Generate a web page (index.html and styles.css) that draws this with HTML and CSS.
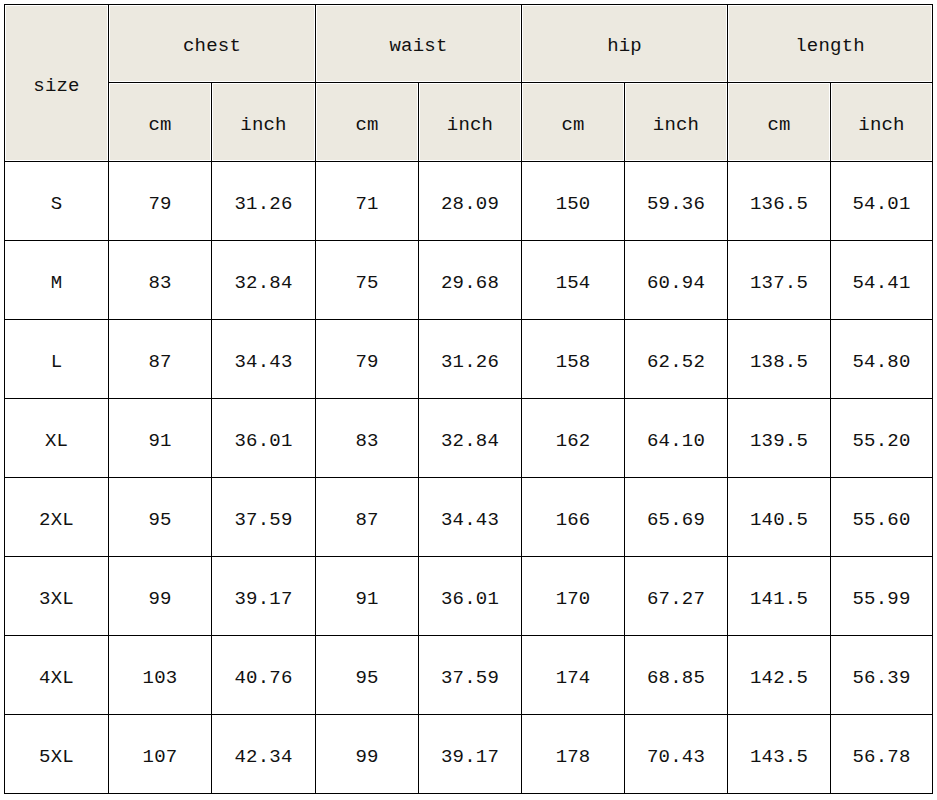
FILE: index.html
```html
<!DOCTYPE html>
<html>
<head>
<meta charset="utf-8">
<link rel="stylesheet" href="styles.css">
</head>
<body>
<table class="size-table">
  <colgroup>
    <col class="c-size">
    <col class="c-a"><col class="c-b"><col class="c-a"><col class="c-a">
    <col class="c-a"><col class="c-a"><col class="c-a"><col class="c-last">
  </colgroup>
  <thead>
    <tr class="h1">
      <th rowspan="2">size</th>
      <th colspan="2">chest</th>
      <th colspan="2">waist</th>
      <th colspan="2">hip</th>
      <th colspan="2">length</th>
    </tr>
    <tr class="h2">
      <th>cm</th><th>inch</th><th>cm</th><th>inch</th><th>cm</th><th>inch</th><th>cm</th><th>inch</th>
    </tr>
  </thead>
  <tbody>
    <tr><td>S</td><td>79</td><td>31.26</td><td>71</td><td>28.09</td><td>150</td><td>59.36</td><td>136.5</td><td>54.01</td></tr>
    <tr><td>M</td><td>83</td><td>32.84</td><td>75</td><td>29.68</td><td>154</td><td>60.94</td><td>137.5</td><td>54.41</td></tr>
    <tr><td>L</td><td>87</td><td>34.43</td><td>79</td><td>31.26</td><td>158</td><td>62.52</td><td>138.5</td><td>54.80</td></tr>
    <tr><td>XL</td><td>91</td><td>36.01</td><td>83</td><td>32.84</td><td>162</td><td>64.10</td><td>139.5</td><td>55.20</td></tr>
    <tr><td>2XL</td><td>95</td><td>37.59</td><td>87</td><td>34.43</td><td>166</td><td>65.69</td><td>140.5</td><td>55.60</td></tr>
    <tr><td>3XL</td><td>99</td><td>39.17</td><td>91</td><td>36.01</td><td>170</td><td>67.27</td><td>141.5</td><td>55.99</td></tr>
    <tr><td>4XL</td><td>103</td><td>40.76</td><td>95</td><td>37.59</td><td>174</td><td>68.85</td><td>142.5</td><td>56.39</td></tr>
    <tr><td>5XL</td><td>107</td><td>42.34</td><td>99</td><td>39.17</td><td>178</td><td>70.43</td><td>143.5</td><td>56.78</td></tr>
  </tbody>
</table>
</body>
</html>
```
FILE: styles.css
```css
html, body {
  margin: 0;
  padding: 0;
  background: #ffffff;
}
body {
  padding: 4px 0 0 4px;
}
.size-table {
  border-collapse: collapse;
  table-layout: fixed;
  width: 929px;
  font-family: "Liberation Mono", "DejaVu Sans Mono", monospace;
  font-size: 19px;
  color: #111;
}
.c-size { width: 104px; }
.c-a { width: 103px; }
.c-b { width: 104px; }
.c-last { width: 102px; }
.size-table th,
.size-table td {
  border: 1px solid #000;
  text-align: center;
  vertical-align: middle;
  padding: 5px 0 0 0;
  font-weight: normal;
  letter-spacing: 0.2px;
}
.size-table th {
  background: #ece9e0;
  box-shadow: inset 1px 1px 0 #fff, inset -1px -1px 0 #fff;
}
.h1 th { height: 78px; box-sizing: border-box; }
.h2 th { height: 79px; box-sizing: border-box; }
.size-table tbody tr { height: 79px; }
```
